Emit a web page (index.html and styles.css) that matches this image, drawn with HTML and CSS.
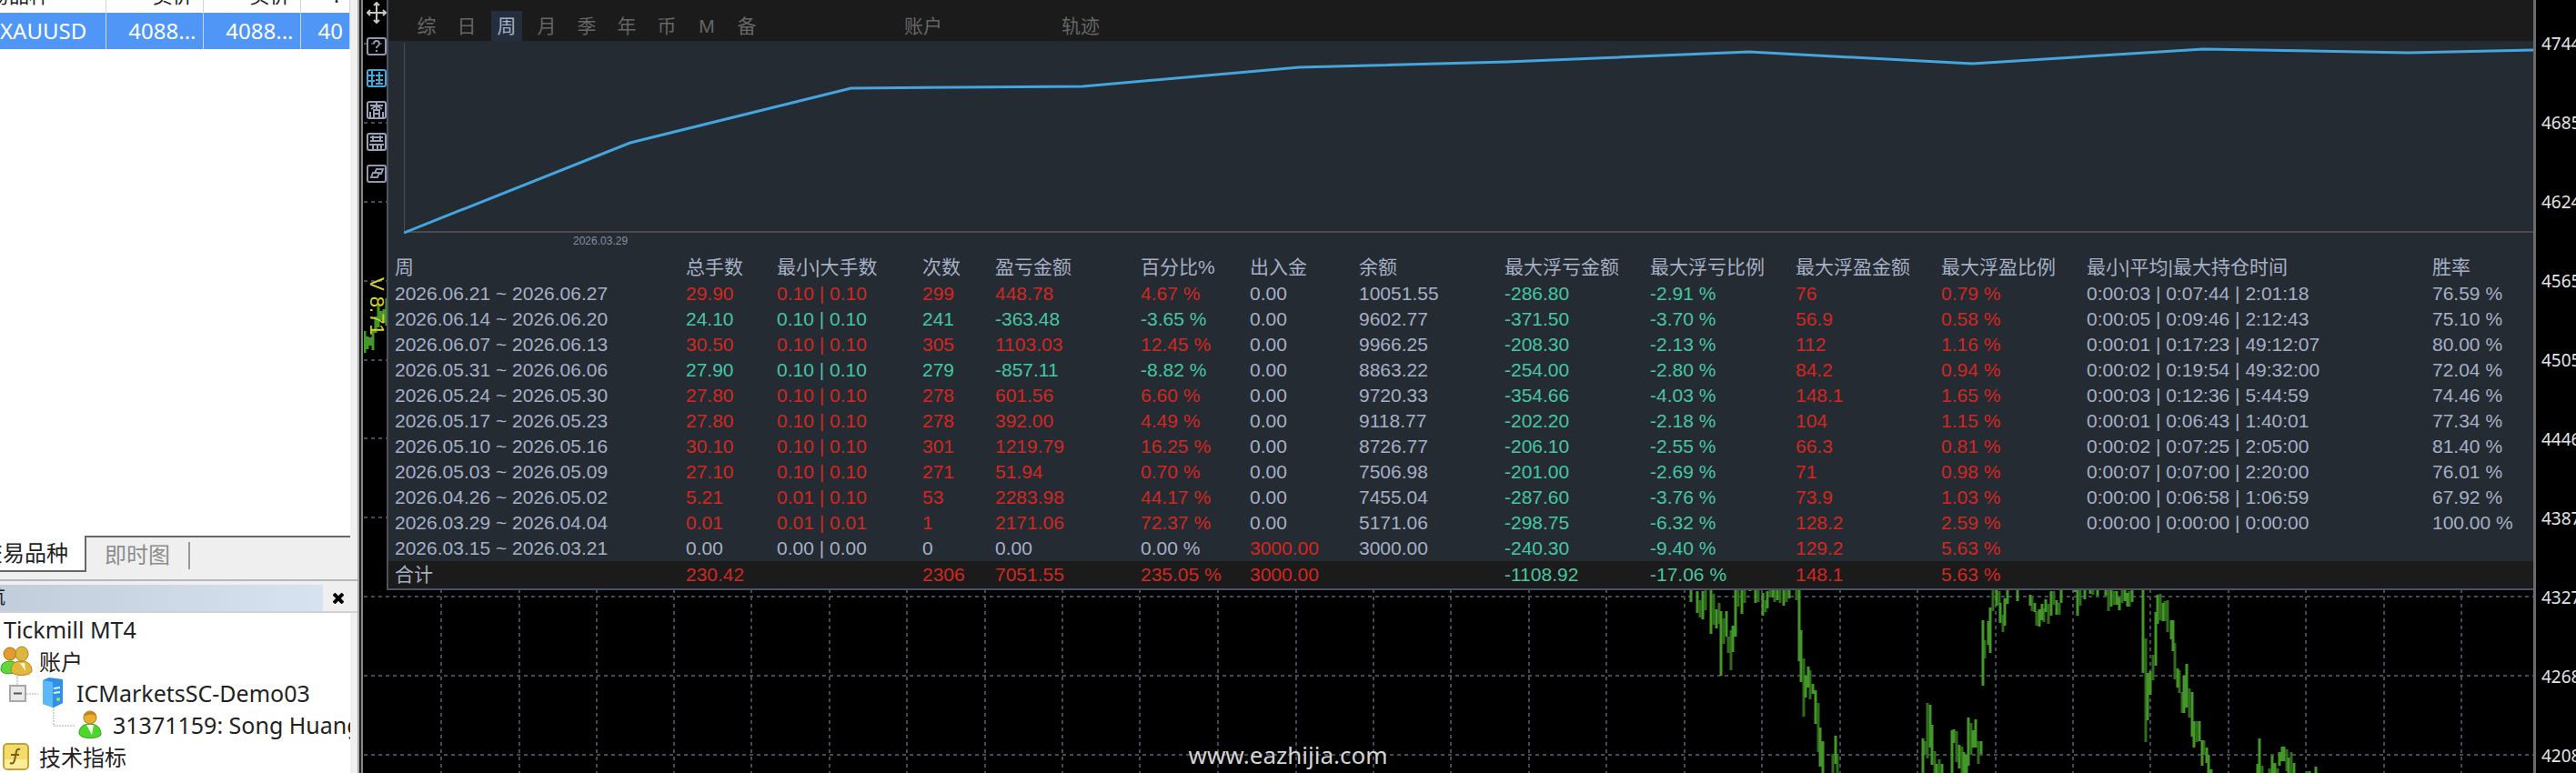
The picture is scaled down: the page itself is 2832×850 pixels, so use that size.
FILE: index.html
```html
<!DOCTYPE html>
<html lang="zh-CN">
<head>
<meta charset="utf-8">
<title>XAUUSD</title>
<link rel="stylesheet" href="styles.css">
</head>
<body>
<div class="terminal">

<aside class="sidebar">
  <section class="market">
    <table class="symbols">
      <colgroup><col class="s-name"><col class="s-price"><col class="s-price"><col class="s-spread"></colgroup>
      <thead>
        <tr><th class="name"><span>交易品种</span></th><th>卖价</th><th>买价</th><th>!</th></tr>
      </thead>
      <tbody>
        <tr><td class="name">XAUUSD</td><td>4088...</td><td>4088...</td><td>40</td></tr>
      </tbody>
    </table>
  </section>
  <div class="market-tabs">
    <button type="button" class="market-tab active"><span>交易品种</span></button>
    <button type="button" class="market-tab">即时图</button>
  </div>
  <div class="nav-title">
    <div class="nav-caption"><span>导航</span></div>
    <button type="button" class="nav-close" aria-label="关闭">
      <svg width="12" height="12" viewBox="0 0 12 12"><path d="M1 1L11 11M11 1L1 11" stroke="#000" stroke-width="4"/></svg>
    </button>
  </div>
  <ul class="tree">
    <li class="lv0 root">Tickmill MT4</li>
    <li class="lv0">
      <svg width="36" height="35" viewBox="0 0 36 35">
        <path d="M19 33V35" stroke="#aaa"/>
        <path d="M1 26C1 19 6 17 12 17S20 22 20 28C14 32 1 32 1 26Z" fill="#5fd93a" stroke="#3b9c22"/>
        <circle cx="11" cy="9" r="7" fill="#e59a2c" stroke="#a8701c"/>
        <path d="M12 28C12 19 17 17 24 17S35 21 35 28C33 34 14 34 12 28Z" fill="#e0b83c" stroke="#a8842a"/>
        <ellipse cx="24" cy="9" rx="7" ry="8" fill="#dcb63e" stroke="#a8842a"/>
        <path d="M22 19L28 28L27 19Z" fill="#fdf6d8"/>
      </svg>
      <span class="cjk">账户</span>
    </li>
    <li class="lv1">
      <svg width="68" height="35" viewBox="0 0 68 35">
        <path d="M9 0V9M19 18H32M49 32V35" stroke="#aaa" stroke-dasharray="2 1"/>
        <rect x="1" y="9" width="17" height="17" fill="#e8e8e8" stroke="#a8a8a8" stroke-width="2"/>
        <path d="M5 17.500H14" stroke="#555" stroke-width="2"/>
        <path d="M37 3L44 0L59 2V28L49 33L37 29Z" fill="#2b8fe6"/>
        <path d="M37 3L48 5V33L37 29Z" fill="#5bb8fa"/>
        <path d="M48 5L59 2V28L48 33Z" fill="#2c92ea"/>
        <path d="M49 12L56 11M49 17L56 16" stroke="#e6f5ff" stroke-width="2"/>
        <circle cx="54" cy="24" r="2" fill="#b5dc4a"/>
      </svg>
      ICMarketsSC-Demo03
    </li>
    <li class="lv2">
      <svg width="60" height="35" viewBox="0 0 60 35">
        <path d="M1 0V18H24" fill="none" stroke="#aaa" stroke-dasharray="2 1"/>
        <path d="M29 27C29 19 34 16 41 16S53 20 53 28C50 33 31 33 29 27Z" fill="#4fd62e" stroke="#35a01e"/>
        <path d="M37 17H45L43 28Z" fill="#f4fff0"/>
        <circle cx="41" cy="9" r="7" fill="#e8b02e" stroke="#a8741c"/>
        <path d="M34 8C34 0 48 0 48 8C44 4 38 6 34 8Z" fill="#c8841c"/>
      </svg>
      31371159: Song Huang
    </li>
    <li class="lv0">
      <svg width="36" height="35" viewBox="0 0 36 35">
        <rect x="4" y="3" width="27" height="28" rx="4" fill="#f4dc6a" stroke="#c3a23c" stroke-width="2"/>
        <path d="M5 20H30V27Q30 30 27 30H8Q5 30 5 27Z" fill="#faee9a"/>
        <path d="M22 9C17 7 18 14 16 21C15 25 13 25 11 24M12 15H21" fill="none" stroke="#7a5d14" stroke-width="2"/>
      </svg>
      <span class="cjk">技术指标</span>
    </li>
  </ul>
</aside>

<main class="chart">
  <svg class="canvas" width="2432" height="850" viewBox="0 0 2432 850">
    <g class="grid">
      <path d="M0 48H2386M0 135H2386M0 222H2386M0 309H2386M0 396H2386M0 482H2386M0 569H2386M0 656H2386M0 743H2386M0 830H2386"/>
      <path d="M85 0V850M171 0V850M256 0V850M341 0V850M426 0V850M512 0V850M597 0V850M683 0V850M768 0V850M853 0V850M939 0V850M1025 0V850M1110 0V850M1195 0V850M1281 0V850M1366 0V850M1452 0V850M1537 0V850M1623 0V850M1708 0V850M1794 0V850M1879 0V850M1964 0V850M2050 0V850M2135 0V850M2221 0V850M2306 0V850"/>
    </g>
    <!-- price bars -->
    <path class="bars dim" d="M1469 660V679M1475 647V671M1484 653V687M1490 663V686M1495 680V708M1500 700V718M1503 693V737M1511 647V667M1518 647V663M1533 647V662M1541 660V673M1546 647V655M1551 647V662M1557 647V663M1564 647V662M1575 647V660M1583 724V788M1590 737V769M1599 773V827M1615 829V850M1620 829V850M1716 815V830M1719 773V834M1727 826V850M1732 835V850M1751 804V838M1757 821V850M1767 795V830M1775 815V840M1782 704V724M1791 647V672M1798 650V665M1802 676V695M1834 657V672M1839 672V688M1847 669V684M1852 664V686M1858 650V665M1864 663V676M1887 647V666M1901 647V654M1918 647V672M1924 650V665M1933 647V663M1941 650V667M1959 702V816M1967 720V748M1975 653V682M1980 661V683M1983 660V695M1991 707V747M1996 737V762M1999 761V784M2007 757V789M2015 793V816M2023 814V830M2087 842V850M2095 845V850M2104 845V850M2114 824V848M2119 827V850M2136 848V850"/>
    <path class="bars" d="M1459 647V662M1466 650V674M1472 650V681M1481 647V697M1487 670V691M1492 672V743M1498 672V700M1505 688V717M1508 647V700M1515 647V675M1524 647V650M1530 647V663M1538 652V677M1543 650V669M1549 647V657M1554 647V660M1561 647V666M1567 647V658M1578 647V727M1580 693V750M1585 743V767M1588 733V756M1593 752V763M1596 759V796M1601 800V843M1604 815V850M1618 809V840M1714 812V850M1722 775V822M1724 797V841M1729 840V850M1735 840V850M1746 803V850M1748 802V817M1754 819V845M1759 827V850M1762 830V850M1764 789V842M1769 803V822M1772 791V822M1778 815V829M1780 682V754M1786 683V709M1788 668V718M1795 647V666M1799 663V685M1804 658V688M1807 647V664M1818 647V661M1832 654V666M1837 663V673M1842 670V689M1845 664V682M1849 659V673M1855 650V677M1861 660V676M1866 647V663M1881 647V651M1884 647V677M1892 647V659M1898 647V653M1906 647V655M1915 647V655M1921 647V667M1927 650V665M1930 657V671M1936 648V661M1939 652V667M1944 647V662M1956 647V740M1961 740V792M1964 738V764M1970 673V732M1972 654V686M1978 663V683M1987 682V703M1989 682V716M1994 735V756M2001 743V784M2004 730V778M2010 761V810M2012 793V822M2018 793V815M2021 814V842M2026 822V839M2028 830V850M2031 846V850M2082 840V850M2084 812V850M2098 831V850M2101 839V850M2106 827V842M2109 821V837M2111 821V837M2116 833V850M2122 839V850M2139 848V850M2146 843V850"/>
    <path class="bars" d="M1 364V388M4 370V384M7 371V380M10 362V385M13 348V366M16 335V360M19 342V352M22 340V355M25 328V358"/>
  </svg>

  <div class="tools">
    <button type="button" class="tool" aria-label="移动"><svg width="22" height="24" viewBox="0 0 22 24" fill="none" stroke="#c8c8c0" stroke-width="2"><path d="M11 2V22M2 12H20M8 4L11 1L14 4M8 20L11 23L14 20M4 9L1 12L4 15M18 9L21 12L18 15"/></svg></button>
    <button type="button" class="tool" aria-label="帮助"><svg width="22" height="20" viewBox="0 0 22 20" fill="none" stroke="#8e99b0" stroke-width="2"><rect x="1" y="1" width="20" height="18" rx="2"/><path d="M8 7Q8 4 11 4T14 7Q14 9 11 11V12M11 14V16"/></svg></button>
    <button type="button" class="tool" aria-label="统计"><svg width="22" height="20" viewBox="0 0 22 20" fill="none" stroke="#3fa9dc" stroke-width="2"><rect x="1" y="1" width="20" height="18" rx="2"/><path d="M6 2V18M2 7H9M2 13H9M14 3V17M10 7H18M10 12H18M10 16H18"/></svg></button>
    <button type="button" class="tool" aria-label="查询"><svg width="22" height="20" viewBox="0 0 22 20" fill="none" stroke="#98a3ba" stroke-width="2"><rect x="1" y="1" width="20" height="18" rx="2"/><path d="M4 5H18M11 2V9M5 9L11 5L17 9M8 18V10H14V18M8 14H14M4 12V18M18 12V18"/></svg></button>
    <button type="button" class="tool" aria-label="面板"><svg width="22" height="20" viewBox="0 0 22 20" fill="none" stroke="#98a3ba" stroke-width="2"><rect x="1" y="1" width="20" height="18" rx="2"/><path d="M7 3V8M15 3V8M4 5H18M4 9H18M3 13H19M7 14V18M12 14V18M16 14V18"/></svg></button>
    <button type="button" class="tool" aria-label="窗口"><svg width="22" height="20" viewBox="0 0 22 20" fill="none" stroke="#8e99b0" stroke-width="2"><rect x="1" y="1" width="20" height="18" rx="2"/><path d="M9 9L11 5H18L16 10H13M5 14L7 9H14L12 14Z"/></svg></button>
    <div class="version">V 8.71</div>
  </div>

  <section class="panel">
    <nav class="periods">
      <button type="button">综</button>
      <button type="button">日</button>
      <button type="button" class="on">周</button>
      <button type="button">月</button>
      <button type="button">季</button>
      <button type="button">年</button>
      <button type="button">币</button>
      <button type="button">M</button>
      <button type="button">备</button>
      <button type="button" class="account">账户</button>
      <button type="button" class="track">轨迹</button>
    </nav>
    <svg class="curve" viewBox="0 0 2343 212" preserveAspectRatio="none">
      <path d="M0 2V210H2343" stroke="#4c4c4e" stroke-width="2"/>
      <path d="M0 211L249 112L492 52L747 50L985 29L1214 23L1480 12L1726 25L1980 9L2206 13L2343 10" stroke="#45a5de" stroke-width="3"/>
    </svg>
    <div class="curve-date">2026.03.29</div>

    <table class="report">
      <colgroup><col class="w320"><col class="w100"><col class="w160"><col class="w80"><col class="w160"><col class="w120"><col class="w120"><col class="w160"><col class="w160"><col class="w160"><col class="w160"><col class="w160"><col class="w380"><col></colgroup>
      <thead>
        <tr><th>周</th><th>总手数</th><th>最小|大手数</th><th>次数</th><th>盈亏金额</th><th>百分比%</th><th>出入金</th><th>余额</th><th>最大浮亏金额</th><th>最大浮亏比例</th><th>最大浮盈金额</th><th>最大浮盈比例</th><th>最小|平均|最大持仓时间</th><th>胜率</th></tr>
      </thead>
      <tbody>
        <tr class="up"><td>2026.06.21 ~ 2026.06.27</td><td>29.90</td><td>0.10 | 0.10</td><td>299</td><td>448.78</td><td>4.67 %</td><td>0.00</td><td>10051.55</td><td>-286.80</td><td>-2.91 %</td><td>76</td><td>0.79 %</td><td>0:00:03 | 0:07:44 | 2:01:18</td><td>76.59 %</td></tr>
        <tr class="down"><td>2026.06.14 ~ 2026.06.20</td><td>24.10</td><td>0.10 | 0.10</td><td>241</td><td>-363.48</td><td>-3.65 %</td><td>0.00</td><td>9602.77</td><td>-371.50</td><td>-3.70 %</td><td>56.9</td><td>0.58 %</td><td>0:00:05 | 0:09:46 | 2:12:43</td><td>75.10 %</td></tr>
        <tr class="up"><td>2026.06.07 ~ 2026.06.13</td><td>30.50</td><td>0.10 | 0.10</td><td>305</td><td>1103.03</td><td>12.45 %</td><td>0.00</td><td>9966.25</td><td>-208.30</td><td>-2.13 %</td><td>112</td><td>1.16 %</td><td>0:00:01 | 0:17:23 | 49:12:07</td><td>80.00 %</td></tr>
        <tr class="down"><td>2026.05.31 ~ 2026.06.06</td><td>27.90</td><td>0.10 | 0.10</td><td>279</td><td>-857.11</td><td>-8.82 %</td><td>0.00</td><td>8863.22</td><td>-254.00</td><td>-2.80 %</td><td>84.2</td><td>0.94 %</td><td>0:00:02 | 0:19:54 | 49:32:00</td><td>72.04 %</td></tr>
        <tr class="up"><td>2026.05.24 ~ 2026.05.30</td><td>27.80</td><td>0.10 | 0.10</td><td>278</td><td>601.56</td><td>6.60 %</td><td>0.00</td><td>9720.33</td><td>-354.66</td><td>-4.03 %</td><td>148.1</td><td>1.65 %</td><td>0:00:03 | 0:12:36 | 5:44:59</td><td>74.46 %</td></tr>
        <tr class="up"><td>2026.05.17 ~ 2026.05.23</td><td>27.80</td><td>0.10 | 0.10</td><td>278</td><td>392.00</td><td>4.49 %</td><td>0.00</td><td>9118.77</td><td>-202.20</td><td>-2.18 %</td><td>104</td><td>1.15 %</td><td>0:00:01 | 0:06:43 | 1:40:01</td><td>77.34 %</td></tr>
        <tr class="up"><td>2026.05.10 ~ 2026.05.16</td><td>30.10</td><td>0.10 | 0.10</td><td>301</td><td>1219.79</td><td>16.25 %</td><td>0.00</td><td>8726.77</td><td>-206.10</td><td>-2.55 %</td><td>66.3</td><td>0.81 %</td><td>0:00:02 | 0:07:25 | 2:05:00</td><td>81.40 %</td></tr>
        <tr class="up"><td>2026.05.03 ~ 2026.05.09</td><td>27.10</td><td>0.10 | 0.10</td><td>271</td><td>51.94</td><td>0.70 %</td><td>0.00</td><td>7506.98</td><td>-201.00</td><td>-2.69 %</td><td>71</td><td>0.98 %</td><td>0:00:07 | 0:07:00 | 2:20:00</td><td>76.01 %</td></tr>
        <tr class="up"><td>2026.04.26 ~ 2026.05.02</td><td>5.21</td><td>0.01 | 0.10</td><td>53</td><td>2283.98</td><td>44.17 %</td><td>0.00</td><td>7455.04</td><td>-287.60</td><td>-3.76 %</td><td>73.9</td><td>1.03 %</td><td>0:00:00 | 0:06:58 | 1:06:59</td><td>67.92 %</td></tr>
        <tr class="up"><td>2026.03.29 ~ 2026.04.04</td><td>0.01</td><td>0.01 | 0.01</td><td>1</td><td>2171.06</td><td>72.37 %</td><td>0.00</td><td>5171.06</td><td>-298.75</td><td>-6.32 %</td><td>128.2</td><td>2.59 %</td><td>0:00:00 | 0:00:00 | 0:00:00</td><td>100.00 %</td></tr>
        <tr><td>2026.03.15 ~ 2026.03.21</td><td>0.00</td><td>0.00 | 0.00</td><td>0</td><td>0.00</td><td>0.00 %</td><td class="in">3000.00</td><td>3000.00</td><td>-240.30</td><td>-9.40 %</td><td>129.2</td><td>5.63 %</td><td></td><td></td></tr>
      </tbody>
      <tfoot>
        <tr class="up"><td>合计</td><td>230.42</td><td></td><td>2306</td><td>7051.55</td><td>235.05 %</td><td class="in">3000.00</td><td></td><td>-1108.92</td><td>-17.06 %</td><td>148.1</td><td>5.63 %</td><td></td><td></td></tr>
      </tfoot>
    </table>
  </section>

  <ol class="scale">
    <li>4744</li>
    <li>4685</li>
    <li>4624</li>
    <li>4565</li>
    <li>4505</li>
    <li>4446</li>
    <li>4387</li>
    <li>4327</li>
    <li>4268</li>
    <li>4208</li>
  </ol>
</main>

<div class="watermark">www.eazhijia.com</div>
</div>
</body>
</html>
```

FILE: styles.css
```css
* {
  box-sizing: border-box;
}

body {
  margin: 0;
  background: #000;
  font-family: "Noto Sans", "Noto Sans CJK SC", sans-serif;
  font-size: 24px;
  color: #222;
}

button {
  margin: 0;
  padding: 0;
  border: 0;
  background: none;
  color: inherit;
  font: inherit;
}

svg {
  display: block;
  flex: none;
}

.terminal {
  position: relative;
  display: flex;
  height: 100vh;
  overflow: hidden;
}

/* left side: market watch and navigator */
.sidebar {
  flex: none;
  display: flex;
  flex-direction: column;
  width: 400px;
  overflow: hidden;
  background: linear-gradient(90deg, #efefef 393px, #aaa 393px, #aaa 395px, #222 395px, #222 397px, #888 397px, #888 399px, #000 399px);
}

.market {
  flex: 1;
  width: 385px;
  min-height: 0;
  overflow: hidden;
  background: #fff;
}

.symbols {
  width: 385px;
  margin-top: -26px;
  border-collapse: collapse;
  table-layout: fixed;
}

.s-name {
  width: 116px;
}

.s-price {
  width: 107px;
}

.symbols th,
.symbols td {
  height: 40px;
  padding: 0 7px 0 0;
  border-right: 1px solid #d4d4d4;
  text-align: right;
  font-weight: normal;
  line-height: 24px;
  white-space: nowrap;
}

.symbols th {
  padding-right: 11px;
  font-size: 22px;
}

.symbols td {
  background: #5096f7;
  color: #fff;
}

.symbols .name {
  padding-left: 0;
  text-align: left;
}

.symbols .name span {
  display: block;
  width: 54px;
  direction: rtl;
  overflow: hidden;
}

.market-tabs {
  flex: none;
  display: flex;
  width: 385px;
  height: 48px;
  padding-bottom: 8px;
}

.market-tab {
  position: relative;
  padding: 0 20px;
  border-top: 2px solid #666;
  color: #8c8c8c;
  line-height: 36px;
  white-space: nowrap;
}

.market-tab:last-child {
  flex: 1;
  text-align: left;
}

.market-tab:last-child::after {
  content: "";
  position: absolute;
  left: 112px;
  top: 5px;
  height: 30px;
  border-left: 2px solid #999;
}

.market-tab.active {
  display: flex;
  justify-content: flex-end;
  width: 95px;
  padding-right: 18px;
  border: solid #666;
  border-width: 0 2px 2px 0;
  background: #fff;
  color: #222;
  line-height: 38px;
  overflow: hidden;
}

.nav-title {
  flex: none;
  display: flex;
  width: 393px;
  height: 37px;
  padding-top: 4px;
  border-top: 2px solid #b8b8b8;
  border-bottom: 2px solid #d2d2d2;
}

.nav-caption {
  display: flex;
  justify-content: flex-end;
  width: 355px;
  padding-right: 349px;
  background: linear-gradient(90deg, #c2cddb, #d7e3f0);
  font-size: 22px;
  line-height: 22px;
  white-space: nowrap;
}

.nav-close {
  display: flex;
  align-items: center;
  justify-content: center;
  width: 34px;
}

.tree {
  flex: none;
  width: 385px;
  height: 176px;
  margin: 0;
  padding: 1px 0 0;
  overflow: hidden;
  background: #fff;
  list-style: none;
  font-size: 25px;
}

.tree li {
  display: flex;
  align-items: center;
  height: 35px;
  line-height: 35px;
  white-space: nowrap;
}

.tree svg {
  margin-right: 6px;
}

.tree .cjk {
  margin-left: 1px;
  font-size: 24px;
}

.tree .root {
  padding-left: 4px;
}

.tree .lv1 {
  padding-left: 10px;
}

.tree .lv2 {
  padding-left: 58px;
}

/* chart window */
.chart {
  position: relative;
  flex: 1;
  display: flex;
  min-width: 0;
}

.canvas {
  position: absolute;
  left: 0;
  top: 0;
}

.grid path {
  fill: none;
  stroke: #454c58;
  stroke-width: 2;
  stroke-dasharray: 4 4;
}

.bars {
  fill: none;
  stroke: #44982a;
  stroke-width: 3;
}

.bars.dim {
  stroke: #2f6c1c;
}

.tools {
  position: relative;
  flex: none;
  display: flex;
  flex-direction: column;
  align-items: flex-end;
  gap: 15px;
  width: 25px;
  padding-top: 2px;
}

.version {
  margin-top: 89px;
  color: #d8d02c;
  font-family: "Liberation Sans", sans-serif;
  font-size: 22px;
  line-height: 22px;
  writing-mode: vertical-rl;
}

.panel {
  position: relative;
  flex: 1;
  align-self: flex-start;
  min-width: 0;
  border: solid #4b5363;
  border-width: 0 0 2px 2px;
  background: #252b33;
  color: #a5b0c5;
  font-family: "Liberation Sans", "Noto Sans CJK SC", sans-serif;
  font-size: 21px;
}

.periods {
  display: flex;
  gap: 10px;
  height: 45px;
  padding: 12px 0 0 25px;
  background: #1b1b1b;
  color: #666;
}

.periods button {
  width: 34px;
  height: 33px;
  line-height: 33px;
  white-space: nowrap;
}

.periods .on {
  background: #252e3c;
  color: #a5b0c5;
}

.periods .account,
.periods .track {
  width: 42px;
}

.periods .account {
  margin-left: 146px;
}

.periods .track {
  margin-left: 121px;
}

.curve {
  width: calc(100% - 17px);
  height: 212px;
  margin-left: 17px;
  overflow: hidden;
}

.curve path {
  fill: none;
}

.curve-date {
  height: 22px;
  padding-left: 203px;
  color: #858e9e;
  font-size: 12px;
  line-height: 16px;
}

.report {
  width: 100%;
  border-collapse: collapse;
  table-layout: fixed;
}

.w80 { width: 80px; }
.w100 { width: 100px; }
.w120 { width: 120px; }
.w160 { width: 160px; }
.w320 { width: 320px; }
.w380 { width: 380px; }

.report th,
.report td {
  height: 28px;
  padding: 0 0 0 7px;
  font-weight: normal;
  line-height: 28px;
  text-align: left;
  white-space: nowrap;
}

.report th {
  height: 30px;
}

.report tfoot td {
  height: 30px;
  background: #1b1b1b;
}

/* lots, min|max, count, profit and percent follow the sign of the week */
.up td:nth-child(n+2):nth-child(-n+6),
.report td:nth-child(11),
.report td:nth-child(12),
.report .in {
  color: #d3271f;
}

.down td:nth-child(n+2):nth-child(-n+6),
.report td:nth-child(9),
.report td:nth-child(10) {
  color: #48c5a2;
}

.scale {
  position: relative;
  flex: none;
  width: 47px;
  margin: 0;
  padding: 5px 0 0;
  overflow: hidden;
  border-left: 3px solid #6a6a6a;
  background: #000;
  color: #e4e4e4;
  font-size: 19px;
  line-height: 89px;
  list-style: none;
}

.scale li {
  display: flex;
  align-items: center;
  gap: 6px;
  height: 87px;
}

.scale li::before {
  content: "";
  width: 2px;
  height: 2px;
  background: #ccc;
}

.watermark {
  position: absolute;
  left: 0;
  right: 0;
  bottom: 4px;
  color: #d4d4d4;
  font-size: 26px;
  line-height: 32px;
  text-align: center;
}
```
